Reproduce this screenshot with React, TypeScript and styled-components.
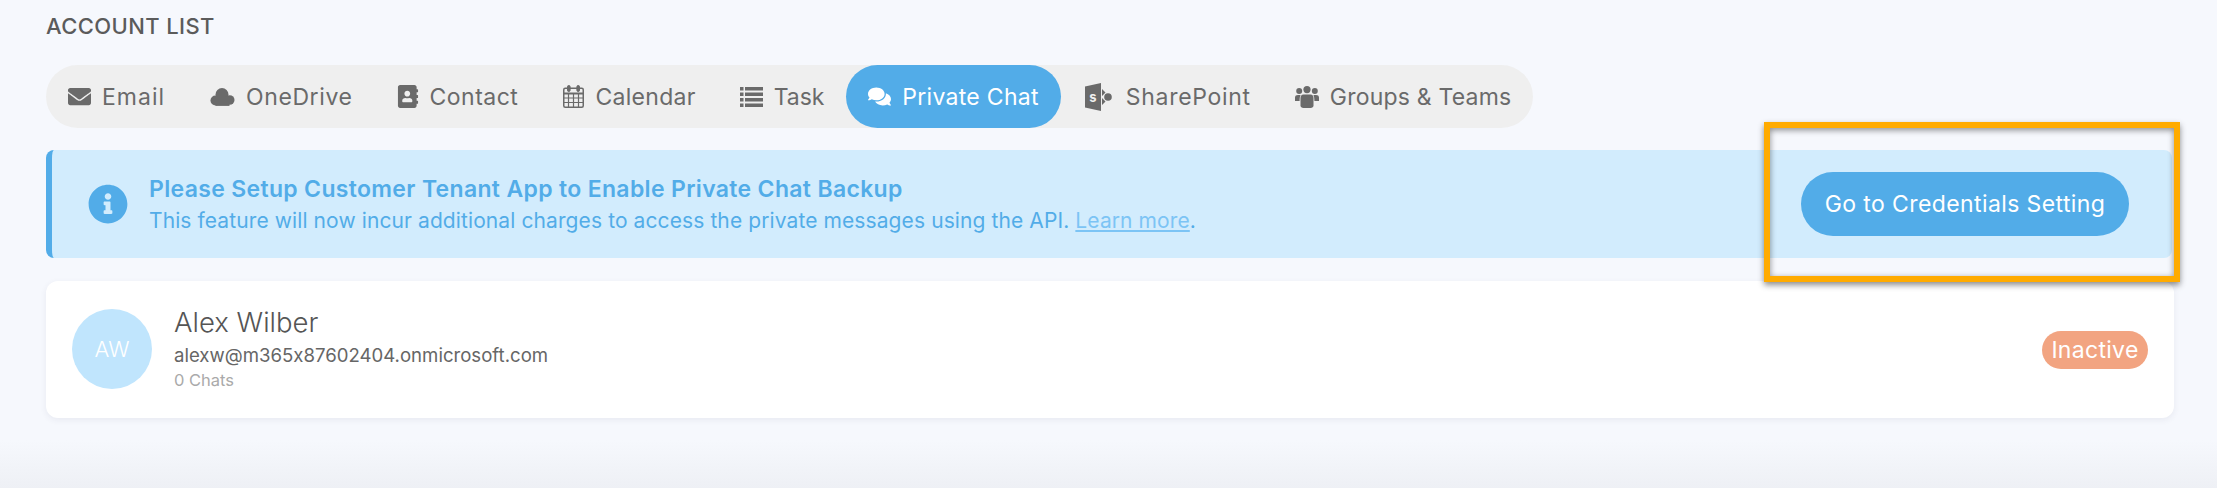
import React from "react";
import styled, { createGlobalStyle } from "styled-components";
import { FaAddressBook, FaComments, FaEnvelope, FaInfoCircle } from "react-icons/fa";

const GlobalStyle = createGlobalStyle`
  html, body {
    margin: 0;
    padding: 0;
    height: 100%;
  }
  body {
    font-family: Inter, "Open Sans", "Liberation Sans", sans-serif;
    font-feature-settings: "calt" 0;
    background: #f6f8fd;
    overflow: hidden;
  }
`;

function CloudIcon() {
  return (
    <svg width="25" height="18" viewBox="0 0 24 18" fill="currentColor">
      <circle cx="11.5" cy="6.5" r="6.5" />
      <circle cx="5" cy="12.5" r="5" />
      <circle cx="19.2" cy="12" r="4.8" />
      <rect x="5" y="9" width="14" height="8.9" />
    </svg>
  );
}

function CalendarIcon() {
  return (
    <svg width="21" height="23" viewBox="0 0 21 23" fill="none" stroke="currentColor">
      <rect x="0.75" y="3.25" width="19.5" height="19" rx="1.5" strokeWidth="1.5" />
      <path d="M1 8.5h19" strokeWidth="2" />
      <path d="M1 13h19M1 17.5h19M5.5 8.5v14M10.5 8.5v14M15.5 8.5v14" strokeWidth="1.2" />
      <rect x="4.5" y="0.5" width="2.6" height="6" rx="1.3" fill="currentColor" strokeWidth="1" />
      <rect x="13.9" y="0.5" width="2.6" height="6" rx="1.3" fill="currentColor" strokeWidth="1" />
    </svg>
  );
}

function ListIcon() {
  return (
    <svg width="23" height="20" viewBox="0 0 23 20" fill="currentColor">
      <path d="M0 0h3.5v3.5H0zM5 0h18v3.5H5zM0 5.5h3.5V9H0zM5 5.5h18V9H5zM0 11h3.5v3.5H0zM5 11h18v3.5H5zM0 16.5h3.5V20H0zM5 16.5h18V20H5z" />
    </svg>
  );
}

function SharePointIcon() {
  return (
    <svg width="27" height="28" viewBox="0 0 27 28">
      <path d="M0 3.5 16 0v28L0 24.5z" fill="currentColor" />
      <text x="8" y="18.5" fontFamily="Inter, sans-serif" fontSize="13" fontWeight="700" fill="#efefef" textAnchor="middle">
        s
      </text>
      <path d="M17 6l3.5 3.5L17 13zM17 15l3.5 3.5L17 22z" fill="currentColor" />
      <circle cx="23" cy="14" r="3.8" fill="currentColor" />
    </svg>
  );
}

function GroupIcon() {
  return (
    <svg width="24" height="22" viewBox="0 0 24 22" fill="currentColor">
      <circle cx="4.2" cy="5" r="3" />
      <circle cx="19.8" cy="5" r="3" />
      <circle cx="12" cy="3.6" r="3.6" />
      <path d="M0 15v-3.5C0 9.8 1.2 9 3 9h2.6c-.8 1.6-1 3.5-1 6zM24 15v-3.5c0-1.7-1.2-2.5-3-2.5h-2.6c.8 1.6 1 3.5 1 6z" />
      <path d="M8.5 8.5h7c2 0 3 1.3 3 3.5v7.5c0 1.6-1.2 2.5-3 2.5h-7c-1.8 0-3-.9-3-2.5V12c0-2.2 1-3.5 3-3.5z" />
    </svg>
  );
}

type TabItem = {
  label: string;
  icon: React.ReactNode;
  slot: number;
  track: number;
  active?: boolean;
};

const tabs: TabItem[] = [
  { label: "Email", icon: <FaEnvelope size={23} />, slot: 23, track: 1 },
  { label: "OneDrive", icon: <CloudIcon />, slot: 26, track: 0.6 },
  { label: "Contact", icon: <FaAddressBook size={23} />, slot: 22, track: 0.5 },
  { label: "Calendar", icon: <CalendarIcon />, slot: 22, track: 0.3 },
  { label: "Task", icon: <ListIcon />, slot: 23, track: -0.1 },
  { label: "Private Chat", icon: <FaComments size={23} />, slot: 23, track: 0.3, active: true },
  { label: "SharePoint", icon: <SharePointIcon />, slot: 32, track: 0.7 },
  { label: "Groups & Teams", icon: <GroupIcon />, slot: 24, track: 0.2 },
];

function App() {
  return (
    <Page>
      <GlobalStyle />
      <Heading>ACCOUNT LIST</Heading>
      <TabBar>
        {tabs.map((tab) => (
          <Tab key={tab.label} $active={tab.active}>
            <TabIcon $width={tab.slot}>{tab.icon}</TabIcon>
            <TabLabel $track={tab.track}>{tab.label}</TabLabel>
          </Tab>
        ))}
      </TabBar>
      <Alert>
        <AlertIcon>
          <FaInfoCircle size={40} />
        </AlertIcon>
        <AlertBody>
          <AlertTitle>Please Setup Customer Tenant App to Enable Private Chat Backup</AlertTitle>
          <AlertText>
            This feature will now incur additional charges to access the private messages using the
            API. <LearnMore href="#">Learn more</LearnMore>.
          </AlertText>
        </AlertBody>
        <PrimaryButton>Go to Credentials Setting</PrimaryButton>
        <Highlight />
      </Alert>
      <AccountCard>
        <Avatar>AW</Avatar>
        <AccountInfo>
          <AccountName>Alex Wilber</AccountName>
          <AccountEmail>alexw@m365x87602404.onmicrosoft.com</AccountEmail>
          <AccountMeta>0 Chats</AccountMeta>
        </AccountInfo>
        <StatusBadge>Inactive</StatusBadge>
      </AccountCard>
    </Page>
  );
}

const Page = styled.div`
  box-sizing: border-box;
  height: 488px;
  padding: 0 43px 0 46px;
  background: linear-gradient(to bottom, #f6f8fd 0, #f6f8fd 440px, #eef0f5 488px);
`;

const Heading = styled.h2`
  margin: 0;
  height: 65px;
  padding-top: 14px;
  box-sizing: border-box;
  font-size: 22px;
  line-height: 24px;
  font-weight: 500;
  letter-spacing: 0.4px;
  color: #5b5b5b;
`;

const TabBar = styled.div`
  display: inline-flex;
  vertical-align: top;
  height: 63px;
  border-radius: 32px;
  background: #efefef;
`;

const Tab = styled.div<{ $active?: boolean }>`
  display: flex;
  align-items: center;
  gap: 11px;
  padding: 0 22px;
  border-radius: 32px;
  font-size: 23px;
  color: ${(p) => (p.$active ? "#fff" : "#6a6a6a")};
  background: ${(p) => (p.$active ? "#52ace8" : "transparent")};
`;

const TabIcon = styled.span<{ $width: number }>`
  display: flex;
  align-items: center;
  justify-content: center;
  width: ${(p) => p.$width}px;
`;

const TabLabel = styled.span<{ $track: number }>`
  letter-spacing: ${(p) => p.$track}px;
  white-space: nowrap;
`;

const Alert = styled.div`
  position: relative;
  display: flex;
  align-items: center;
  box-sizing: border-box;
  height: 108px;
  margin: 22px 2px 0 0;
  padding: 0 43px 0 36px;
  border-left: 6px solid #52ace8;
  border-radius: 8px;
  background: #d2ecfd;
`;

const AlertIcon = styled.div`
  display: flex;
  color: #52ace8;
  margin-right: 21px;
`;

const AlertBody = styled.div`
  flex: 1;
  display: flex;
  flex-direction: column;
  gap: 5px;
  color: #52ace8;
`;

const AlertTitle = styled.div`
  font-size: 23px;
  line-height: 28px;
  font-weight: 600;
  letter-spacing: 0.33px;
  margin-top: -1px;
`;

const AlertText = styled.div`
  font-size: 21px;
  line-height: 25px;
  letter-spacing: 0.1px;
`;

const LearnMore = styled.a`
  color: #7cc4f5;
  text-decoration: underline;
`;

const PrimaryButton = styled.button`
  box-sizing: border-box;
  width: 328px;
  height: 64px;
  border: 0;
  border-radius: 32px;
  background: #52ace8;
  color: #fff;
  font-family: inherit;
  font-size: 23px;
  letter-spacing: 0.4px;
`;

const Highlight = styled.div`
  position: absolute;
  top: -28px;
  right: -8px;
  box-sizing: border-box;
  width: 416px;
  height: 160px;
  border: 6px solid #ffab00;
  box-shadow: 0 3px 6px rgba(0, 0, 0, 0.45), inset 0 2px 6px rgba(0, 0, 0, 0.45);
  pointer-events: none;
`;

const AccountCard = styled.div`
  display: flex;
  align-items: center;
  gap: 22px;
  box-sizing: border-box;
  height: 137px;
  margin-top: 23px;
  padding: 0 26px;
  border-radius: 12px;
  background: #fff;
  box-shadow: 0 2px 6px rgba(60, 70, 100, 0.08);
`;

const Avatar = styled.div`
  display: flex;
  align-items: center;
  justify-content: center;
  width: 80px;
  height: 80px;
  margin-top: -2px;
  border-radius: 50%;
  background: #c0e5fd;
  color: #fff;
  font-size: 22px;
  font-weight: 300;
`;

const AccountInfo = styled.div`
  flex: 1;
  display: flex;
  flex-direction: column;
  margin-top: -4px;
`;

const AccountName = styled.div`
  font-size: 27.5px;
  line-height: 32px;
  font-weight: 300;
  color: #555;
`;

const AccountEmail = styled.div`
  margin-top: 5px;
  font-size: 18.6px;
  line-height: 24px;
  color: #666;
`;

const AccountMeta = styled.div`
  margin-top: 3px;
  font-size: 16.5px;
  line-height: 20px;
  color: #aaa;
`;

const StatusBadge = styled.div`
  box-sizing: border-box;
  width: 106px;
  height: 38px;
  border-radius: 19px;
  background: #f2a481;
  color: #fff;
  font-size: 23px;
  letter-spacing: 0.3px;
  line-height: 38px;
  text-align: center;
`;

export default App;
